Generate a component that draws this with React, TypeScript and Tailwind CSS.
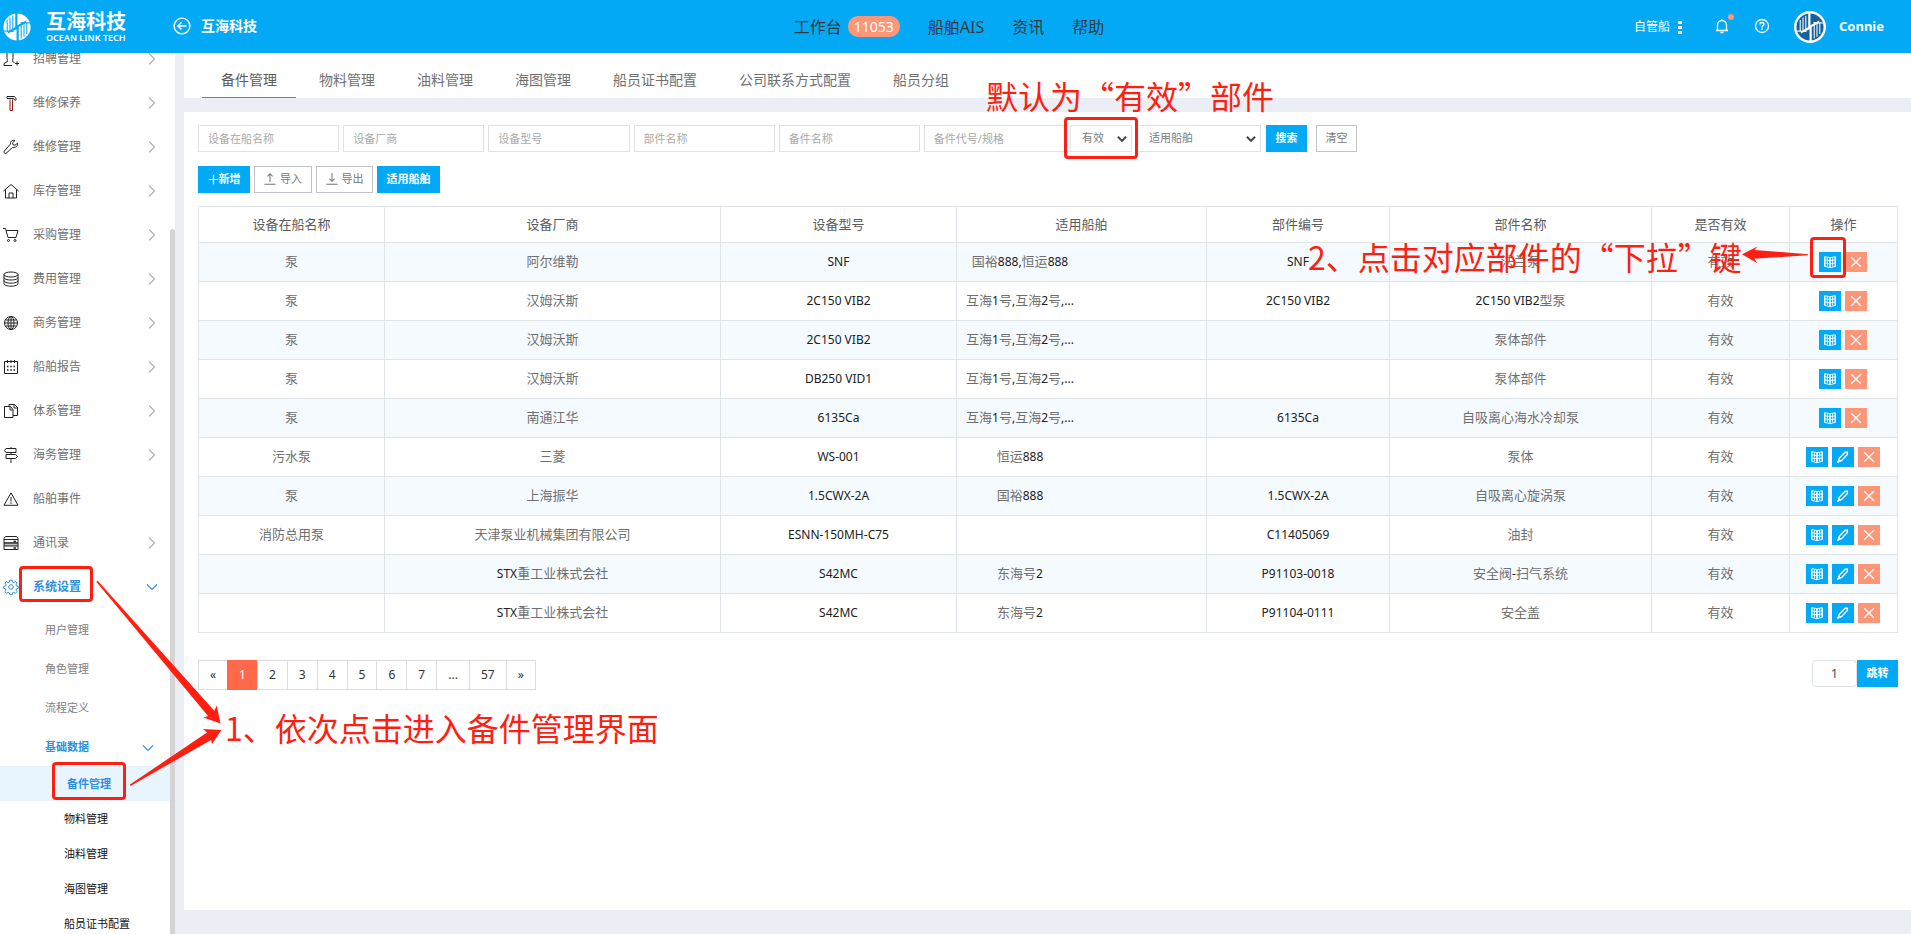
import React from "react";

type IconProps = { className?: string };

const Stroke = ({
  children,
  className = "size-4",
  w = 1,
}: {
  children: React.ReactNode;
  className?: string;
  w?: number;
}) => (
  <svg
    viewBox="0 0 16 16"
    fill="none"
    stroke="currentColor"
    strokeWidth={w}
    className={`shrink-0 ${className}`}
    aria-hidden="true"
  >
    {children}
  </svg>
);

const LinkMark = ({ className, fg, bg }: { className: string; fg: string; bg: string }) => (
  <svg viewBox="0 0 32 32" className={className} aria-hidden="true">
    <circle cx="16" cy="16" r="15.5" fill={fg} />
    <path d="M4.800 8v13M8 5v16M11.200 3v16M20.800 13v16M24 11v16M27.200 11v13" stroke={bg} strokeWidth="1.2" />
    <path d="M14 0h2.500v14l10-5.500V11L18 16v16h-2.500V18.500L5.500 23.500V21l8.500-5z" fill={bg} />
    <path d="M0 20.500l12 .5M32 11.500l-12-.5" stroke={bg} strokeWidth="1.2" />
  </svg>
);

const icons: Record<string, React.ReactNode> = {
  recruit: (
    <path d="M4 1.500v5c0 2 .5 3 .5 4L1 12.500v2h8M10 1.500v5c0 2-.5 3-.5 4l2 1M12 12.500h4M14 10.500v4" />
  ),
  hammer: (
    <>
      <path d="M4 1.500h7.500l1.500 2v1.500h-1.500l-1-1.500H4z" />
      <path d="M7 4.500v11h2.500v-11" stroke="#8c1a14" />
    </>
  ),
  wrench: (
    <path d="M14.500 4.200l-2.500 2-2-.4-.4-2L12 1.500C9.800.8 7.200 2 7.300 5.200L1.300 12c-.8 1 0 2.700 1.500 2.600L9.500 8.500c3.200.3 5.500-1.500 5-4.300z" />
  ),
  house: <path d="M.5 8L8 1.500 15.500 8M2.500 6.500v8.500h11V6.500M6 15v-5h4v5" />,
  cart: (
    <>
      <path d="M0 1.500h2.500L5 10.500h8l2-7H3.200" />
      <circle cx="5.500" cy="13.500" r="1" />
      <circle cx="12" cy="13.500" r="1" />
    </>
  ),
  coins: (
    <>
      <ellipse cx="8" cy="3.500" rx="7" ry="2.500" />
      <path d="M1 3.500v9c0 1.500 3 2.700 7 2.700s7-1.200 7-2.700v-9M1 6.500C1 8 4 9 8 9s7-1 7-2.500M1 9.500C1 11 4 12.200 8 12.200s7-1.200 7-2.700" />
    </>
  ),
  globe: (
    <>
      <circle cx="8" cy="8" r="6.500" />
      <ellipse cx="8" cy="8" rx="3" ry="6.500" />
      <path d="M8 1.500v13M1.500 8h13M2.500 5h11M2.500 11h11" />
    </>
  ),
  calendar: (
    <>
      <path d="M1.500 2.500h13v12h-13zM4.500 1v3M8 1v3M11.500 1v3" />
      <path d="M4 7.500h1.500M7.300 7.500h1.500M10.500 7.500H12M4 11h1.500M7.300 11h1.500M10.500 11H12" strokeWidth="1.500" />
    </>
  ),
  files: <path d="M1.500 3.500h6l2.500 3v8H1.500zM7 3.500v3.500h3M6 3V1.500h5.500l3 3v8H10M11 1.500v3.500h3.500" />,
  signs: <path d="M3 1.500h10v4H3L1.500 3.500zM3 7.500h9.500l2 2-2 2H3zM8 0v1.500M8 5.500v2M8 11.500V16" />,
  warning: <path d="M8 1.800L15 14.300H1zM8 6v4.500M8 11.500v1.500" />,
  drawers: (
    <>
      <path d="M1 9h14v2H1z" fill="#bbb" stroke="none" />
      <path d="M2.500 1.500h11l1.500 2v4.500H1V3.500zM1 8h14v6.500H1zM1 4.500h14M1 11h14" />
      <path d="M10.500 6.500h2.500M10.500 13h2.500" strokeWidth="1.500" />
    </>
  ),
  gear: (
    <>
      <circle cx="8" cy="8" r="2.300" />
      <path d="M6.800 1.200h2.400l.4 1.900 1.200.5 1.700-1.100 1.500 1.600-1 1.700.5 1.200 1.800.4v2l-1.800.5-.5 1.200 1 1.600-1.600 1.600-1.600-1-1.200.5-.4 1.900H6.800l-.4-1.900-1.200-.5-1.700 1L2 12.700l1-1.600-.5-1.200-1.800-.5v-2l1.800-.4.5-1.200-1-1.700 1.500-1.600 1.700 1.100 1.200-.5z" />
    </>
  ),
};

const menu: { icon: string; label: string; arrow?: boolean }[] = [
  { icon: "recruit", label: "招聘管理", arrow: true },
  { icon: "hammer", label: "维修保养", arrow: true },
  { icon: "wrench", label: "维修管理", arrow: true },
  { icon: "house", label: "库存管理", arrow: true },
  { icon: "cart", label: "采购管理", arrow: true },
  { icon: "coins", label: "费用管理", arrow: true },
  { icon: "globe", label: "商务管理", arrow: true },
  { icon: "calendar", label: "船舶报告", arrow: true },
  { icon: "files", label: "体系管理", arrow: true },
  { icon: "signs", label: "海务管理", arrow: true },
  { icon: "warning", label: "船舶事件" },
  { icon: "drawers", label: "通讯录", arrow: true },
];

const ChevronRight = () => (
  <Stroke className="size-4 text-[#b0b0b8]" w={1.2}>
    <path d="M5 2.500l5.500 5.500L5 13.500" />
  </Stroke>
);
const ChevronDown = ({ className = "" }: IconProps) => (
  <Stroke className={`size-4 text-[#3b8fdd] ${className}`} w={1.2}>
    <path d="M3 5.500l5 5 5-5" />
  </Stroke>
);

function Header() {
  return (
    <header className="flex h-[53px] shrink-0 items-center bg-[#04a9f5] text-white">
      <div className="flex flex-1 items-center">
        <LinkMark className="ml-[3px] size-7" fg="#ffffff" bg="#04a9f5" />
        <div className="ml-[15px] flex w-[122px] flex-col">
          <span className="text-[20px] leading-[22px] font-bold">互海科技</span>
          <span className="text-[9px] leading-[9px] font-semibold">OCEAN LINK TECH</span>
        </div>
        <button type="button" aria-label="返回" className="ml-[5px] pb-0.5">
          <Stroke className="size-[18px]" w={1.3}>
            <circle cx="8" cy="8" r="7" />
            <path d="M12 8H4.500M7.500 4.800L4.300 8l3.200 3.200" />
          </Stroke>
        </button>
        <span className="ml-2.5 pb-0.5 text-sm font-bold">互海科技</span>
      </div>
      <nav className="flex items-center gap-7 pl-3.5 text-base text-[#2f3a40]">
        <a href="#work" className="flex items-center gap-1.5">
          工作台
          <span className="rounded-[10px] bg-[#fc9678] px-1.5 text-sm leading-[21px] text-white">11053</span>
        </a>
        <a href="#ais">船舶AIS</a>
        <a href="#news">资讯</a>
        <a href="#help">帮助</a>
      </nav>
      <div className="flex flex-1 items-center justify-end pr-[27px]">
        <button type="button" className="flex items-center gap-2 text-xs">
          自管船
          <svg viewBox="0 0 4 14" className="h-3.5 w-1" fill="currentColor" aria-hidden="true">
            <path d="M0 1h4v3H0zM0 6h4v3H0zM0 11h4v3H0z" />
          </svg>
        </button>
        <button type="button" aria-label="通知" className="relative ml-8 pb-0.5">
          <Stroke className="size-4" w={1.3}>
            <path d="M2 12.500h12M3.500 12.500V7a4.500 4.500 0 0 1 9 0v5.500M6.500 14.500h3M8 1v1.500" />
          </Stroke>
          <span className="absolute -top-1 -right-1 size-1.5 rounded-full bg-[#fc9678]" />
        </button>
        <button type="button" aria-label="帮助中心" className="ml-6 pb-0.5">
          <Stroke className="size-4" w={1.3}>
            <circle cx="8" cy="8" r="6.500" />
            <path d="M6 6.500c0-3 4-2.500 4-.2C10 7.800 8 7.600 8 9.500M8 10.500V12" strokeWidth="1.500" />
          </Stroke>
        </button>
        <span className="ml-6 flex size-8 items-center justify-center rounded-full bg-white">
          <LinkMark className="size-7" fg="#17629b" bg="#ffffff" />
        </span>
        <span className="ml-[13px] text-[13px] font-bold">Connie</span>
      </div>
    </header>
  );
}

function Sidebar() {
  return (
    <aside className="flex w-[175px] shrink-0 overflow-hidden bg-white">
      <nav className="-mt-4 w-[170px] shrink-0">
        {menu.map((m) => (
          <a key={m.label} href={`#${m.icon}`} className="flex h-11 items-center pr-2.5 pl-[3px] text-xs text-[#707070]">
            <span className="text-[#222]">
              <Stroke>{icons[m.icon]}</Stroke>
            </span>
            <span className="ml-3.5 flex-1">{m.label}</span>
            {m.arrow && <ChevronRight />}
          </a>
        ))}
        <a href="#settings" className="flex h-11 items-center pr-2.5 pl-[3px] text-xs font-bold text-[#2f8fe0]">
          <Stroke>{icons.gear}</Stroke>
          <span className="ml-3.5 flex-1">系统设置</span>
          <ChevronDown />
        </a>
        <div className="pt-px text-[11px]">
          {["用户管理", "角色管理", "流程定义"].map((t) => (
            <a key={t} href="#sub" className="flex h-[39px] items-center pt-0.5 pl-[45px] text-[#808080]">
              {t}
            </a>
          ))}
          <a href="#base" className="flex h-[39px] items-center justify-between pt-0.5 pr-3.5 pl-[45px] font-bold text-[#2f8fe0]">
            基础数据
            <ChevronDown />
          </a>
          <a href="#parts" className="flex h-[35px] items-center bg-[#e8f4fe] pt-0.5 pl-[67px] font-bold text-[#2f8fe0]">
            备件管理
          </a>
          {["物料管理", "油料管理", "海图管理", "船员证书配置"].map((t) => (
            <a key={t} href="#leaf" className="flex h-[35px] items-center pt-0.5 pl-16 text-[#111]">
              {t}
            </a>
          ))}
        </div>
      </nav>
      <div className="mt-44 flex-1 rounded-t-sm bg-[#d4d4d4]" />
    </aside>
  );
}

const tabs = ["备件管理", "物料管理", "油料管理", "海图管理", "船员证书配置", "公司联系方式配置", "船员分组"];
const filters = ["设备在船名称", "设备厂商", "设备型号", "部件名称", "备件名称", "备件代号/规格"];
const columns = ["设备在船名称", "设备厂商", "设备型号", "适用船舶", "部件编号", "部件名称", "是否有效", "操作"];

const rows: { cells: string[]; edit: boolean }[] = [
  { cells: ["泵", "阿尔维勒", "SNF", "国裕888,恒运888", "SNF", "法兰泵", "有效"], edit: false },
  { cells: ["泵", "汉姆沃斯", "2C150 VIB2", "互海1号,互海2号,...", "2C150 VIB2", "2C150 VIB2型泵", "有效"], edit: false },
  { cells: ["泵", "汉姆沃斯", "2C150 VIB2", "互海1号,互海2号,...", "", "泵体部件", "有效"], edit: false },
  { cells: ["泵", "汉姆沃斯", "DB250 VID1", "互海1号,互海2号,...", "", "泵体部件", "有效"], edit: false },
  { cells: ["泵", "南通江华", "6135Ca", "互海1号,互海2号,...", "6135Ca", "自吸离心海水冷却泵", "有效"], edit: false },
  { cells: ["污水泵", "三菱", "WS-001", "恒运888", "", "泵体", "有效"], edit: true },
  { cells: ["泵", "上海振华", "1.5CWX-2A", "国裕888", "1.5CWX-2A", "自吸离心旋涡泵", "有效"], edit: true },
  { cells: ["消防总用泵", "天津泵业机械集团有限公司", "ESNN-150MH-C75", "", "C11405069", "油封", "有效"], edit: true },
  { cells: ["", "STX重工业株式会社", "S42MC", "东海号2", "P91103-0018", "安全阀-扫气系统", "有效"], edit: true },
  { cells: ["", "STX重工业株式会社", "S42MC", "东海号2", "P91104-0111", "安全盖", "有效"], edit: true },
];

/* Latin runs are set a step smaller and darker than the Chinese text round them. */
const Mixed = ({ text }: { text: string }) => (
  <>
    {text.split(/([ -~]+)/).map((part, i) =>
      i % 2 ? (
        <span key={i} className="text-xs text-[#222]">
          {part}
        </span>
      ) : (
        part
      ),
    )}
  </>
);

const BookIcon = () => (
  <Stroke className="size-3.5" w={1.4}>
    <path d="M8 3L2 2v11l6 1.500 6-1.500V2zM8 3v11.500M2 5.500l6 1 6-1M2 9l6 1.200L14 9M5 2.500V13M11 2.500V13" strokeWidth="1" />
    <path d="M2 2v11M14 2v11M8 3v11.500" />
  </Stroke>
);
const PencilIcon = () => (
  <Stroke className="size-3.5" w={1.6}>
    <path d="M2.500 13.500l1.200-4L10.500 2.500h2.500v2.700L6.500 12z" />
    <path d="M2 14l1.500-3.500 2 2z" fill="currentColor" strokeWidth="1" />
  </Stroke>
);
const CloseIcon = () => (
  <Stroke className="size-3.5" w={1.5}>
    <path d="M2.500 2.500l11 11M13.500 2.500l-11 11" />
  </Stroke>
);

const blueIconBtn = "flex h-5 w-[22px] items-center justify-center bg-[#04a9f5] text-white";
const outlineBtn = "flex h-[27px] items-center justify-center border border-[#c4c4c8] bg-white text-[#777]";
const blueBtn = "flex h-[27px] items-center justify-center bg-[#04a9f5] font-bold text-white";
const field = "h-[27px] min-w-0 border border-[#e0e2e6] bg-white text-[11px] text-[#808080]";

const Select = ({ label, className }: { label: string; className: string }) => (
  <div className={`relative ${className}`}>
    <select aria-label={label} className={`${field} w-full appearance-none pl-[11px]`}>
      <option>{label}</option>
    </select>
    <Stroke className="pointer-events-none absolute top-[9px] right-[5px] size-2.5 text-[#444]" w={3.2}>
      <path d="M1.500 4.500L8 11l6.500-6.500" />
    </Stroke>
  </div>
);

function Toolbar() {
  return (
    <>
      <form className="flex items-center gap-[5px] text-[11px]" onSubmit={(e) => e.preventDefault()}>
        <div className="grid w-[867px] grid-cols-6 gap-1">
          {filters.map((f) => (
            <input key={f} aria-label={f} placeholder={f} className={`${field} w-full px-[9px] placeholder:text-[#aaa]`} />
          ))}
        </div>
        <Select label="有效" className="w-[62px]" />
        <Select label="适用船舶" className="w-[124px]" />
        <button type="submit" className={`${blueBtn} w-[41px]`}>搜索</button>
        <button type="reset" className={`${outlineBtn} ml-1 w-[41px]`}>清空</button>
      </form>
      <div className="mt-3.5 flex gap-1 text-[11px]">
        <button type="button" className={`${blueBtn} w-[52px]`}>
          <Stroke className="size-[11px]" w={1.8}>
            <path d="M8 1v14M1 8h14" />
          </Stroke>
          新增
        </button>
        <button type="button" className={`${outlineBtn} w-[58px] gap-1`}>
          <Stroke className="mb-0.5 size-3" w={1.4}>
            <path d="M8 12V1M4.500 4.500L8 1l3.500 3.500M.5 15h15" />
          </Stroke>
          导入
        </button>
        <button type="button" className={`${outlineBtn} w-[57px] gap-1`}>
          <Stroke className="mb-0.5 size-3" w={1.4}>
            <path d="M8 0v11M4.500 7.500L8 11l3.500-3.500M.5 15h15" />
          </Stroke>
          导出
        </button>
        <button type="button" className={`${blueBtn} w-[63px]`}>适用船舶</button>
      </div>
    </>
  );
}

function PartsTable() {
  return (
    <table className="mt-[13px] w-full table-fixed border-collapse text-center text-[13px] text-[#707070]">
      <colgroup>
        <col className="w-[186px]" />
        <col className="w-[336px]" />
        <col className="w-[236px]" />
        <col className="w-[250px]" />
        <col className="w-[183px]" />
        <col className="w-[262px]" />
        <col className="w-[138px]" />
        <col className="w-[108px]" />
      </colgroup>
      <thead>
        <tr className="h-9">
          {columns.map((c) => (
            <th key={c} className="border border-[#dfe4e8] p-0 font-normal text-[#5c5c5c]">{c}</th>
          ))}
        </tr>
      </thead>
      <tbody>
        {rows.map((r, i) => (
          <tr key={i} className="h-[39px] odd:bg-[#f5fafe]">
            {r.cells.map((c, j) => (
              <td key={j} className="border border-[#dfe4e8] p-0 pb-[3px] leading-5">
                {j === 3 ? (
                  <div className="ml-2 w-[110px] whitespace-nowrap">
                    <Mixed text={c} />
                  </div>
                ) : (
                  <Mixed text={c} />
                )}
              </td>
            ))}
            <td className="border border-[#dfe4e8] p-0 pr-0.5">
              <div className="flex justify-center gap-1">
                <button type="button" aria-label="展开" className={blueIconBtn}>
                  <BookIcon />
                </button>
                {r.edit && (
                  <button type="button" aria-label="编辑" className={blueIconBtn}>
                    <PencilIcon />
                  </button>
                )}
                <button type="button" aria-label="删除" className="flex h-5 w-[22px] items-center justify-center bg-[#fc9678] text-white">
                  <CloseIcon />
                </button>
              </div>
            </td>
          </tr>
        ))}
      </tbody>
    </table>
  );
}

function Pager() {
  const pages = ["«", "1", "2", "3", "4", "5", "6", "7", "...", "57", "»"];
  return (
    <div className="mt-[27px] flex items-start justify-between text-xs">
      <div className="flex pl-px">
        {pages.map((p) => (
          <a
            key={p}
            href="#page"
            className={
              p === "1"
                ? "-ml-px border border-[#ff6849] bg-[#ff6849] px-[11px] leading-7 text-white"
                : "-ml-px border border-[#ddd] bg-white px-[11px] leading-7 text-[#333]"
            }
          >
            {p}
          </a>
        ))}
      </div>
      <div className="flex">
        <input aria-label="页码" defaultValue="1" className="h-[27px] w-[45px] rounded-sm border border-[#dfe4e8] text-center text-[#444]" />
        <button type="button" className={`${blueBtn} w-[41px] text-[11px]`}>跳转</button>
      </div>
    </div>
  );
}

const note = "absolute whitespace-nowrap text-[32px] leading-8 font-['Noto_Sans_CJK_SC',sans-serif]";
const box = "absolute rounded-sm border-3 border-[#ff1f12]";

function Annotations() {
  return (
    <div className="pointer-events-none absolute inset-0 overflow-hidden text-[#ff1f12]">
      <div className={`${box} top-[566px] left-[19px] h-9 w-[74px]`} />
      <div className={`${box} top-[762px] left-[52px] h-[38px] w-[74px]`} />
      <div className={`${box} top-[117px] left-[1064px] h-[42px] w-[74px]`} />
      <div className={`${box} top-[237px] left-[1810px] h-[41px] w-9`} />
      <svg viewBox="0 0 1911 934" className="absolute top-0 left-0 h-[934px] w-[1911px]" fill="currentColor" aria-hidden="true">
        <path d="M97.500 580.500L214.300 710.700 216.700 705.500 220.500 723.500 203.500 717.500 208 716 96.500 582z" />
        <path d="M130 784.500L207 732.500 203 729 221.500 730 212 744 211 740 130.500 786z" />
        <path d="M1742 254.300L1757.500 246.500 1754.500 250 1808 254.200V255.200L1754.500 258.700 1757 263z" />
      </svg>
      <p className={`${note} top-[79px] left-[986px]`}>默认为“有效”部件</p>
      <p className={`${note} top-[240px] left-[1308px]`}>2、点击对应部件的“下拉”键</p>
      <p className={`${note} top-[711px] left-[225px]`}>1、依次点击进入备件管理界面</p>
    </div>
  );
}

export default function App() {
  return (
    <div className="relative flex h-screen flex-col overflow-hidden bg-[#ebeff5] font-['Noto_Sans','Noto_Sans_CJK_SC',sans-serif]">
      <Header />
      <div className="flex min-h-0 flex-1">
        <Sidebar />
        <main className="ml-[9px] flex min-w-0 flex-1 flex-col">
          <nav className="flex h-[45px] shrink-0 gap-1 bg-white pl-[18px]">
            {tabs.map((t, i) => (
              <a
                key={t}
                href="#tab"
                className={
                  i === 0
                    ? "flex items-center border-b border-[#04a9f5] px-[19px] pt-2.5 text-sm text-[#5c5c5c]"
                    : "flex items-center border-b border-transparent px-[19px] pt-2.5 text-sm text-[#707070]"
                }
              >
                {t}
              </a>
            ))}
          </nav>
          <section className="mt-3.5 mb-6 flex-1 bg-white pt-[13px] pr-[13px] pl-3.5">
            <Toolbar />
            <PartsTable />
            <Pager />
          </section>
        </main>
      </div>
      <Annotations />
    </div>
  );
}
